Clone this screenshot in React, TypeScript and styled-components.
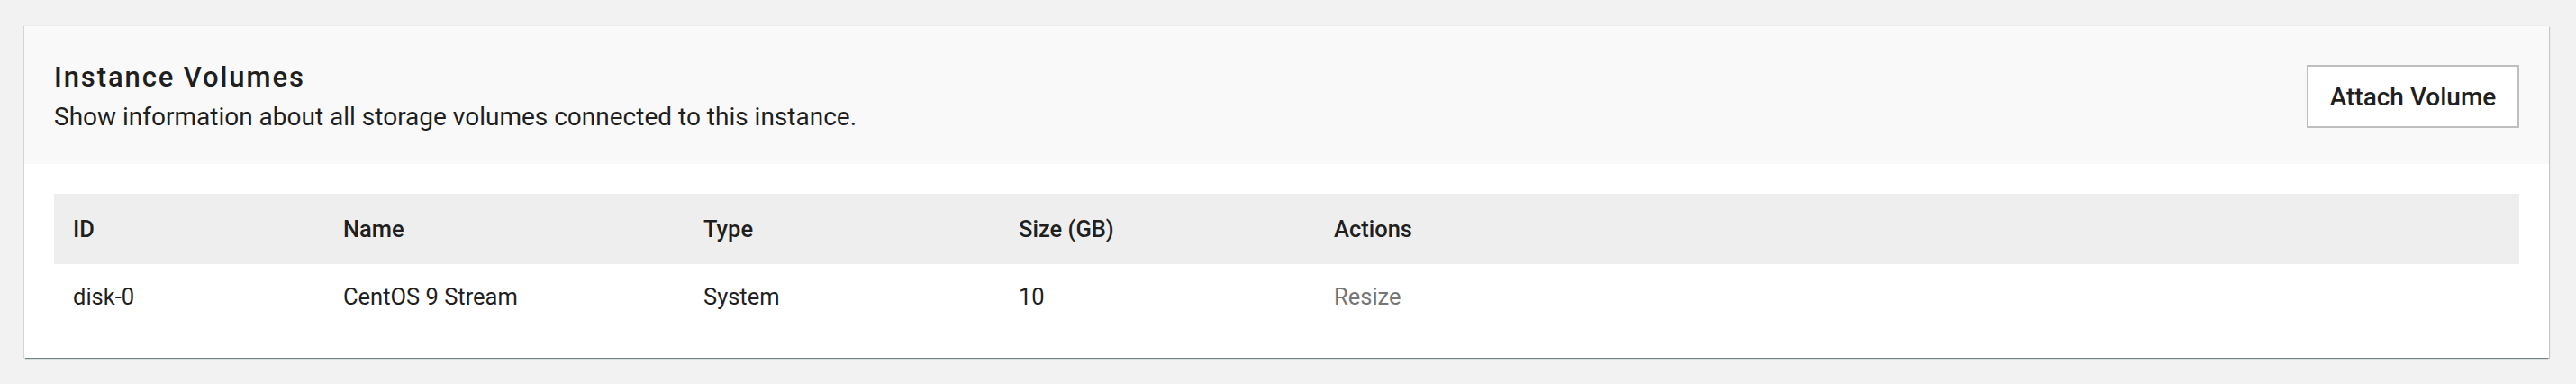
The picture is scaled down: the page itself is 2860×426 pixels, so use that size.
import React from "react";
import styled, { createGlobalStyle } from "styled-components";

const Global = createGlobalStyle`
  html, body {
    margin: 0;
    padding: 0;
    background: #f2f2f2;
    font-family: Roboto, "Liberation Sans", sans-serif;
    color: #212121;
  }
  * { box-sizing: border-box; }
`;

const Page = styled.div`
  padding: 29px 30px 29px 27px;
  min-height: 426px;
`;

const Card = styled.section`
  background: #ffffff;
  box-shadow: 0 2px 1px -1px rgba(60, 90, 90, 0.6), 1px 1px 1px rgba(0, 0, 0, 0.18),
    -1px 0 1px rgba(0, 0, 0, 0.12);
`;

const Header = styled.header`
  background: #f9f9f9;
  display: flex;
  align-items: center;
  justify-content: space-between;
  padding: 37px 33px 34px 33px;
`;

const HeaderText = styled.div`
  display: flex;
  flex-direction: column;
  gap: 6px;
`;

const Title = styled.h2`
  margin: 0;
  font-size: 31px;
  line-height: 40px;
  font-weight: 500;
  letter-spacing: 1.9px;
  color: #1f1f1f;
`;

const Subtitle = styled.p`
  margin: 0;
  font-size: 28px;
  line-height: 36px;
  font-weight: 400;
  color: #1f1f1f;
`;

const Button = styled.button`
  width: 236px;
  height: 70px;
  background: #ffffff;
  border: 2px solid #bfbfbf;
  font-family: inherit;
  font-size: 28px;
  font-weight: 500;
  color: #1f1f1f;
  padding: 0;
  cursor: pointer;
`;

const Body = styled.div`
  padding: 33px;
`;

const Table = styled.table`
  width: 100%;
  border-collapse: collapse;
  table-layout: fixed;
  font-size: 25.5px;
`;

const HeadRow = styled.tr`
  background: #eeeeee;
  height: 78px;
`;

const Row = styled.tr`
  height: 71px;
`;

const Th = styled.th<{ $w?: number }>`
  text-align: left;
  font-weight: 500;
  line-height: 30px;
  padding: 0 0 0 21px;
  color: #1f1f1f;
  width: ${(p) => (p.$w ? `${p.$w}px` : "auto")};
`;

const Td = styled.td<{ $muted?: boolean }>`
  text-align: left;
  font-weight: 400;
  line-height: 30px;
  padding: 0 0 0 21px;
  color: ${(p) => (p.$muted ? "#767676" : "#1f1f1f")};
`;

const columns = [
  { label: "ID", w: 300 },
  { label: "Name", w: 400 },
  { label: "Type", w: 350 },
  { label: "Size (GB)", w: 350 },
  { label: "Actions" },
];

const rows = [{ id: "disk-0", name: "CentOS 9 Stream", type: "System", size: "10" }];

export default function App() {
  return (
    <>
      <Global />
      <Page>
        <Card>
          <Header>
            <HeaderText>
              <Title>Instance Volumes</Title>
              <Subtitle>Show information about all storage volumes connected to this instance.</Subtitle>
            </HeaderText>
            <Button>Attach Volume</Button>
          </Header>
          <Body>
            <Table>
              <thead>
                <HeadRow>
                  {columns.map((c) => (
                    <Th key={c.label} $w={c.w}>
                      {c.label}
                    </Th>
                  ))}
                </HeadRow>
              </thead>
              <tbody>
                {rows.map((r) => (
                  <Row key={r.id}>
                    <Td>{r.id}</Td>
                    <Td>{r.name}</Td>
                    <Td>{r.type}</Td>
                    <Td>{r.size}</Td>
                    <Td $muted>Resize</Td>
                  </Row>
                ))}
              </tbody>
            </Table>
          </Body>
        </Card>
      </Page>
    </>
  );
}
